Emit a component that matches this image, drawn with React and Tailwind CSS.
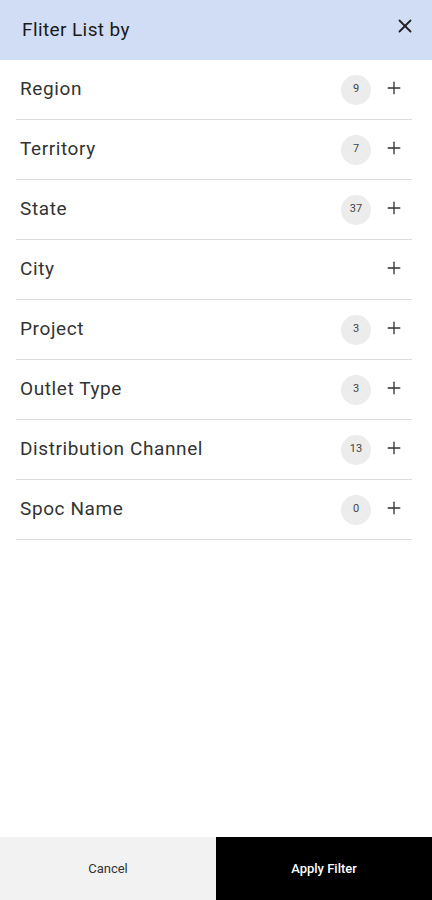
import { X, Plus } from "lucide-react";

const filters = [
  { id: "region", label: "Region", count: 9 },
  { id: "territory", label: "Territory", count: 7 },
  { id: "state", label: "State", count: 37 },
  { id: "city", label: "City", count: null },
  { id: "project", label: "Project", count: 3 },
  { id: "outlet", label: "Outlet Type", count: 3 },
  { id: "channel", label: "Distribution Channel", count: 13 },
  { id: "spoc", label: "Spoc Name", count: 0 },
];

export default function App() {
  return (
    <div
      className="w-[432px] h-[900px] bg-white flex flex-col text-[#222]"
      style={{ fontFamily: "Roboto, 'Noto Sans', sans-serif" }}
    >
      <div className="h-[60px] bg-[#d1ddf5] flex items-center justify-between pl-[22px] pr-[16px]">
        <h1 className="text-[19px] text-[#1a1a1a] tracking-[0.4px] pt-[1px]">Fliter List by</h1>
        <X className="w-[22px] h-[22px] text-[#222] -mt-[8px]" strokeWidth={2} />
      </div>

      <div className="flex-1 pl-4 pr-5">
        {filters.map((f) => (
          <div
            key={f.id}
            className="h-[60px] flex items-center border-b border-[#dcdcdc]"
          >
            <span className="flex-1 pl-[4px] text-[19px] text-[#333] tracking-[0.6px]">{f.label}</span>
            {f.count !== null && (
              <span className="w-[30px] h-[30px] rounded-full bg-[#ececec] flex items-center justify-center text-[11px] text-[#444]">
                {f.count}
              </span>
            )}
            <Plus className="w-[20px] h-[20px] ml-[13px] mr-[8px] -mt-[3px] text-[#333]" strokeWidth={1.6} />
          </div>
        ))}
      </div>

      <div className="h-[63px] flex">
        <button className="w-1/2 bg-[#f2f2f2] text-[13px] text-[#333]">Cancel</button>
        <button className="w-1/2 bg-black text-[13px] font-medium text-white">Apply Filter</button>
      </div>
    </div>
  );
}
